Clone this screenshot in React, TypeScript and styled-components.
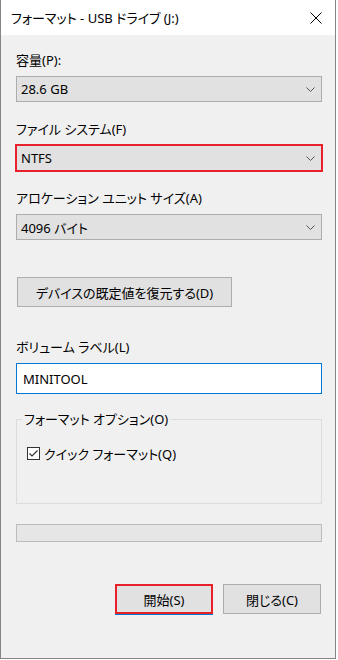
import styled, { createGlobalStyle } from 'styled-components'

const GlobalStyle = createGlobalStyle`
  html, body {
    margin: 0;
    padding: 0;
    background: #ffffff;
  }
  body {
    font-family: "Noto Sans", "Noto Sans CJK JP", sans-serif;
    font-size: 13px;
    font-feature-settings: "palt";
    color: #000000;
  }
`

// styled
const Window = styled.div`
  width: 336px;
  height: 659px;
  box-sizing: border-box;
  border: 1px solid #858585;
  border-top: none;
  background: #f0f0f0;
  display: flex;
  flex-direction: column;
`
const TitleBar = styled.div`
  height: 35px;
  background: #ffffff;
  display: flex;
  align-items: center;
  justify-content: space-between;
  padding: 0 12px 0 10px;
  flex-shrink: 0;
`
const TitleText = styled.span`
  font-size: 13px;
  line-height: 18px;
`
const CloseButton = styled.div`
  display: flex;
  align-items: center;
  justify-content: center;
  width: 14px;
  height: 14px;
`
const Content = styled.div`
  display: flex;
  flex-direction: column;
  padding: 16px 13px 0 15px;
`
const Field = styled.div<{ mt: number }>`
  display: flex;
  flex-direction: column;
  gap: 7px;
  margin-top: ${({ mt }) => mt}px;
`
const Label = styled.div`
  height: 18px;
  line-height: 18px;
  white-space: nowrap;
`
const Combo = styled.div<{ highlight?: boolean }>`
  display: flex;
  align-items: center;
  justify-content: space-between;
  height: 26px;
  box-sizing: border-box;
  background: #e1e1e1;
  padding: 0 6px 0 4px;
  border: 1px solid #adadad;
  ${({ highlight }) =>
    highlight &&
    `
    height: 28px;
    margin: -1px -1px;
    border: 2px solid #e8202a;
  `}
`
const PushButton = styled.div<{ width: number; primary?: boolean }>`
  display: flex;
  align-items: center;
  justify-content: center;
  width: ${({ width }) => width}px;
  height: 30px;
  box-sizing: border-box;
  background: #e1e1e1;
  border: ${({ primary }) => (primary ? '2px solid #e8202a' : '1px solid #adadad')};
  box-shadow: ${({ primary }) => (primary ? '0 1px 0 #0078d7' : 'none')};
  white-space: nowrap;
`
const RestoreRow = styled.div`
  display: flex;
  margin-top: 37px;
  padding-left: 1px;
`
const TextBox = styled.div`
  display: flex;
  align-items: center;
  height: 31px;
  box-sizing: border-box;
  background: #ffffff;
  border: 1px solid #0078d7;
  padding: 0 6px;
`
const GroupBox = styled.fieldset`
  margin: 16px 0 0 0;
  padding: 0 0 0 5px;
  height: 94px;
  box-sizing: border-box;
  border: 1px solid #dcdcdc;
  min-width: 0;
`
const GroupLegend = styled.legend`
  padding: 0 2px;
  height: 18px;
  line-height: 18px;
`
const CheckRow = styled.div`
  display: flex;
  align-items: center;
  gap: 4px;
  margin: 16px 0 0 5px;
  height: 18px;
`
const CheckBox = styled.div`
  width: 13px;
  height: 13px;
  box-sizing: border-box;
  border: 1px solid #333333;
  background: #ffffff;
  display: flex;
  align-items: center;
  justify-content: center;
`
const ProgressBar = styled.div`
  margin-top: 20px;
  height: 18px;
  box-sizing: border-box;
  background: #e6e6e6;
  border: 1px solid #bcbcbc;
`
const ButtonRow = styled.div`
  display: flex;
  justify-content: flex-end;
  gap: 10px;
  margin: 42px 1px 0 0;
`

// components
function Chevron() {
  return (
    <svg width="9" height="5" viewBox="0 0 9 5">
      <polyline points="0.5,0.5 4.5,4.5 8.5,0.5" fill="none" stroke="#555" strokeWidth="1" />
    </svg>
  )
}

interface SelectFieldProps {
  label: string
  value: string
  mt: number
  highlight?: boolean
}

function SelectField({ label, value, mt, highlight }: SelectFieldProps) {
  return (
    <Field mt={mt}>
      <Label>{label}</Label>
      <Combo highlight={highlight}>
        <span>{value}</span>
        <Chevron />
      </Combo>
    </Field>
  )
}

function App() {
  return (
    <>
      <GlobalStyle />
      <Window>
        <TitleBar>
          <TitleText>フォーマット - USB ドライブ (J:)</TitleText>
          <CloseButton>
            <svg width="12" height="12" viewBox="0 0 12 12">
              <path d="M0.5 0.5 L11.5 11.5 M11.5 0.5 L0.5 11.5" stroke="#000" strokeWidth="1" />
            </svg>
          </CloseButton>
        </TitleBar>
        <Content>
          <SelectField mt={0} label="容量(P):" value="28.6 GB" />
          <SelectField mt={18} label="ファイル システム(F)" value="NTFS" highlight />
          <SelectField mt={18} label="アロケーション ユニット サイズ(A)" value="4096 バイト" />
          <RestoreRow>
            <PushButton width={215}>デバイスの既定値を復元する(D)</PushButton>
          </RestoreRow>
          <Field mt={31}>
            <Label>ボリューム ラベル(L)</Label>
            <TextBox>MINITOOL</TextBox>
          </Field>
          <GroupBox>
            <GroupLegend>フォーマット オプション(O)</GroupLegend>
            <CheckRow>
              <CheckBox>
                <svg width="11" height="11" viewBox="0 0 11 11">
                  <polyline points="1.5,5.5 4,8 9.5,2.5" fill="none" stroke="#333" strokeWidth="1.2" />
                </svg>
              </CheckBox>
              <span>クイック フォーマット(Q)</span>
            </CheckRow>
          </GroupBox>
          <ProgressBar />
          <ButtonRow>
            <PushButton width={98} primary>
              開始(S)
            </PushButton>
            <PushButton width={98}>閉じる(C)</PushButton>
          </ButtonRow>
        </Content>
      </Window>
    </>
  )
}

export default App
